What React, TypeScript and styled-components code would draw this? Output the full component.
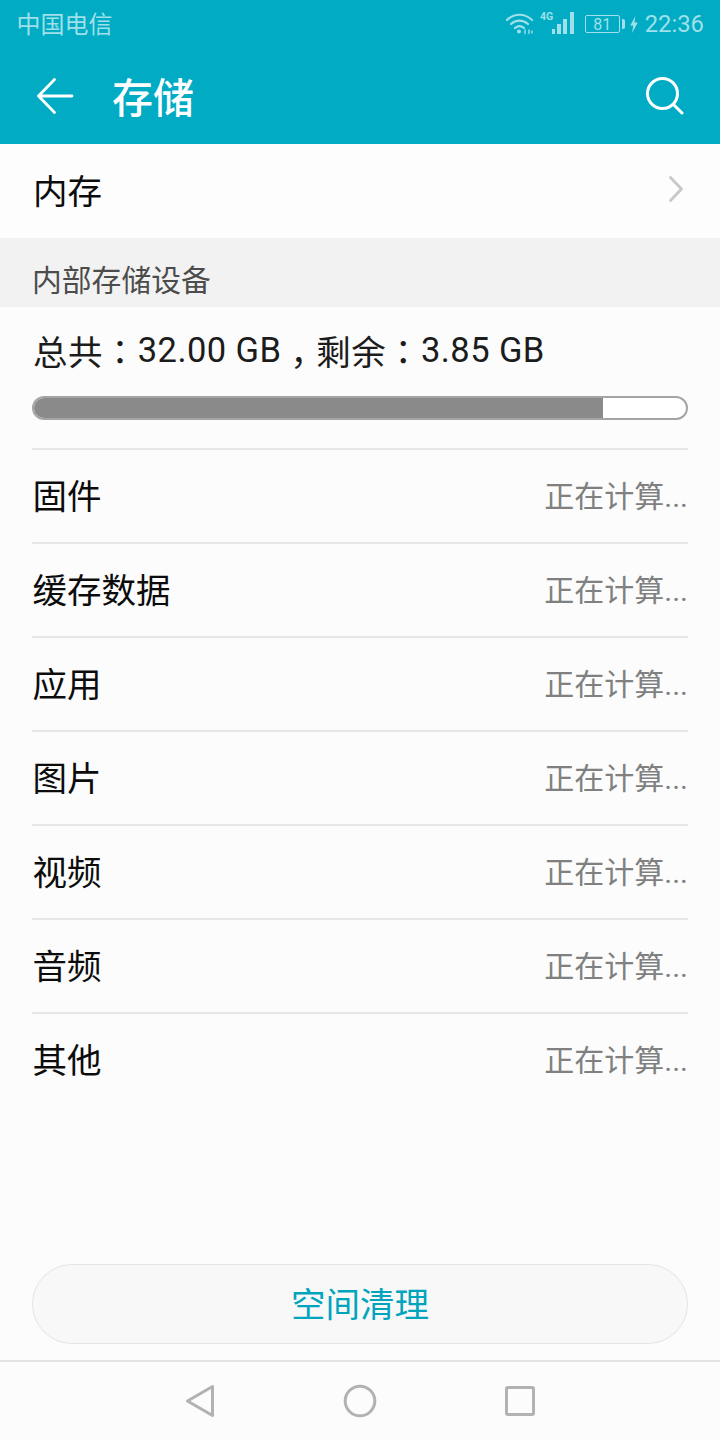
import React from "react";
import styled, { createGlobalStyle } from "styled-components";

const Global = createGlobalStyle`
  html, body { margin: 0; padding: 0; background: #fcfcfc; }
  * { box-sizing: border-box; }
  body { font-family: Roboto, "Noto Sans CJK SC", sans-serif; }
`;
const Page = styled.div`
  width: 720px; height: 1440px; display: flex; flex-direction: column; background: #fcfcfc; overflow: hidden;
`;
const Header = styled.header`
  height: 144px; background: #00abc3; display: flex; flex-direction: column; flex: none;
`;
const StatusBar = styled.div`
  height: 48px; display: flex; align-items: center; justify-content: space-between; padding: 0 16px 0 16.5px;
  color: #9fe0ea;
`;
const Carrier = styled.span`
  font-size: 24px; line-height: 46px; height: 48px; font-family: "Noto Sans CJK SC", sans-serif;
`;
const StatusRight = styled.div`
  display: flex; align-items: center;
`;
const Time = styled.span`
  font-size: 23.8px; margin-left: 6px; font-family: Roboto, sans-serif;
`;
const BatteryBox = styled.div`
  width: 35px; height: 18px; border: 1.5px solid #9fe0ea; border-radius: 2px; margin-left: 10px;
  display: flex; align-items: center; justify-content: center; font-size: 16px; font-family: Roboto, sans-serif;
`;
const BatteryCap = styled.div`
  width: 3px; height: 10px; background: #9fe0ea; margin-left: 2px; border-radius: 0 2px 2px 0;
`;
const Toolbar = styled.div`
  height: 96px; display: flex; align-items: center; padding: 0 36px;
`;
const Title = styled.h1`
  margin: 0 0 3px 38px; flex: 1; font-size: 41px; font-weight: 500; color: #fff; font-family: "Noto Sans CJK SC", sans-serif;
`;
const MemoryRow = styled.div`
  height: 94px; flex: none; display: flex; align-items: center; justify-content: space-between; padding: 0 34px 0 33px; background: #fdfdfd;
`;
const Label = styled.span`
  font-size: 34.5px; color: #0c0c0c; font-family: "Noto Sans CJK SC", sans-serif; line-height: 1; padding-bottom: 4px;
`;
const Section = styled.div`
  height: 69px; flex: none; background: #f2f2f2; padding: 22px 33px 0 32px; font-size: 29.8px; line-height: 36px; color: #4c4c4c;
  font-family: "Noto Sans CJK SC", sans-serif;
`;
const Summary = styled.div`
  height: 89px; flex: none; display: flex; align-items: center; padding: 0 0 4px 33px; font-size: 34.5px; color: #1c1c1c; letter-spacing: 0.42px;
  font-family: Roboto, "Noto Sans CJK SC", sans-serif;
  white-space: pre;
`;
const Colon = styled.span`
  font-family: "Noto Sans CJK KR", sans-serif;
`;
const Comma = styled(Colon)`
  padding-left: 9px; letter-spacing: -8.6px;
`;
const Track = styled.div`
  height: 24px; margin: 0 32px; flex: none; border: 2px solid #a5a5a5; border-radius: 12px; overflow: hidden; background: #fff;
`;
const Fill = styled.div`
  height: 100%; background: #8a8a8a;
`;
const List = styled.div`
  margin: 28px 32px 0; flex: none;
`;
const Row = styled.div`
  height: 94px; display: flex; align-items: center; justify-content: space-between; border-top: 2px solid #e6e6e6; padding: 0 0 0 0.5px;
`;
const Value = styled.span`
  font-size: 30px; color: #808080; font-family: Roboto, "Noto Sans CJK SC", sans-serif; line-height: 1; padding-top: 1px;
`;
const Spacer = styled.div`
  flex: 1;
`;
const CleanButton = styled.button`
  height: 80px; margin: 0 32px 16px; flex: none; border: 1.5px solid #e4e4e4; border-radius: 40px; background: #f8f8f8;
  color: #00a5bd; font-size: 34.5px; font-family: "Noto Sans CJK SC", sans-serif; padding: 0 0 4px;
`;
const NavBar = styled.nav`
  height: 80px; flex: none; border-top: 2px solid #e4e4e4; background: #fcfcfc; display: flex; align-items: center; justify-content: center;
`;
const NavCell = styled.div`
  width: 160px; display: flex; align-items: center; justify-content: center;
`;

const rows = ["固件", "缓存数据", "应用", "图片", "视频", "音频", "其他"];

export default function App() {
  return (
    <Page>
      <Global />
      <Header>
        <StatusBar>
          <Carrier>中国电信</Carrier>
          <StatusRight>
            <svg width="70" height="26" viewBox="0 0 70 26" fill="none" stroke="#9fe0ea" strokeWidth="2.2" strokeLinecap="round">
              <path d="M2 9C9 2 20 2 27 9" />
              <path d="M6 13c5-4.500 12-4.500 17 0" />
              <path d="M10 17c3-2.500 6-2.500 9 0" />
              <circle cx="14" cy="20.500" r="2" fill="#9fe0ea" stroke="none" />
              <path d="M20 19v3.500M24 19v3.500M27 20v2" strokeWidth="1.400" />
              <text x="35" y="8.500" fontSize="10.500" fontWeight="700" fontFamily="Roboto, sans-serif" fill="#9fe0ea" stroke="none">4G</text>
              <g fill="#9fe0ea" stroke="none">
                <rect x="47" y="18" width="3" height="5" />
                <rect x="52" y="13" width="4" height="10" />
                <rect x="58" y="8" width="4" height="15" />
                <rect x="65" y="1" width="4" height="22" />
              </g>
            </svg>
            <BatteryBox>81</BatteryBox>
            <BatteryCap />
            <svg width="10" height="17" viewBox="0 0 10 18" style={{ marginLeft: 4 }} fill="#9fe0ea">
              <path d="M6.500 0 1 10h3.200L3 18l6-11H5.500z" />
            </svg>
            <Time>22:36</Time>
          </StatusRight>
        </StatusBar>
        <Toolbar>
          <svg width="38" height="38" viewBox="0 0 38 38" fill="none" stroke="#fff" strokeWidth="2.800" strokeLinecap="round" strokeLinejoin="round">
            <path d="M36 19H2.500M18.500 2.500 2.500 19l16 16.500" />
          </svg>
          <Title>存储</Title>
          <svg width="38" height="38" viewBox="0 0 38 38" fill="none" stroke="#fff" strokeWidth="3" strokeLinecap="round">
            <circle cx="16.500" cy="16.500" r="15" />
            <path d="M27.500 27.500l8.500 8.500" />
          </svg>
        </Toolbar>
      </Header>
      <MemoryRow>
        <Label>内存</Label>
        <svg width="18" height="28" viewBox="0 0 18 28" fill="none" stroke="#c8c8c8" strokeWidth="2.800" strokeLinecap="round" strokeLinejoin="round" style={{ margin: "-4px 1px 0 0" }}>
          <path d="M3.500 2.500l11 11.500-11 11.500" />
        </svg>
      </MemoryRow>
      <Section>内部存储设备</Section>
      <Summary>
        总共<Colon>：</Colon>32.00 GB<Comma>，</Comma>剩余<Colon>：</Colon>3.85 GB
      </Summary>
      <Track>
        <Fill style={{ width: `87.2%` }} />
      </Track>
      <List>
        {rows.map((r) => (
          <Row key={r}>
            <Label>{r}</Label>
            <Value>正在计算...</Value>
          </Row>
        ))}
      </List>
      <Spacer />
      <CleanButton>空间清理</CleanButton>
      <NavBar>
        <NavCell>
          <svg width="30" height="34" viewBox="0 0 30 34" fill="none" stroke="#b2b2b2" strokeWidth="3" strokeLinejoin="round">
            <path d="M27.500 2.500v29L2.500 17z" />
          </svg>
        </NavCell>
        <NavCell>
          <svg width="34" height="34" viewBox="0 0 34 34" fill="none" stroke="#b2b2b2" strokeWidth="3">
            <circle cx="17" cy="17" r="14.800" />
          </svg>
        </NavCell>
        <NavCell>
          <svg width="30" height="30" viewBox="0 0 30 30" fill="none" stroke="#b2b2b2" strokeWidth="3" strokeLinejoin="round">
            <rect x="1.500" y="1.500" width="27" height="27" rx="1.500" />
          </svg>
        </NavCell>
      </NavBar>
    </Page>
  );
}
